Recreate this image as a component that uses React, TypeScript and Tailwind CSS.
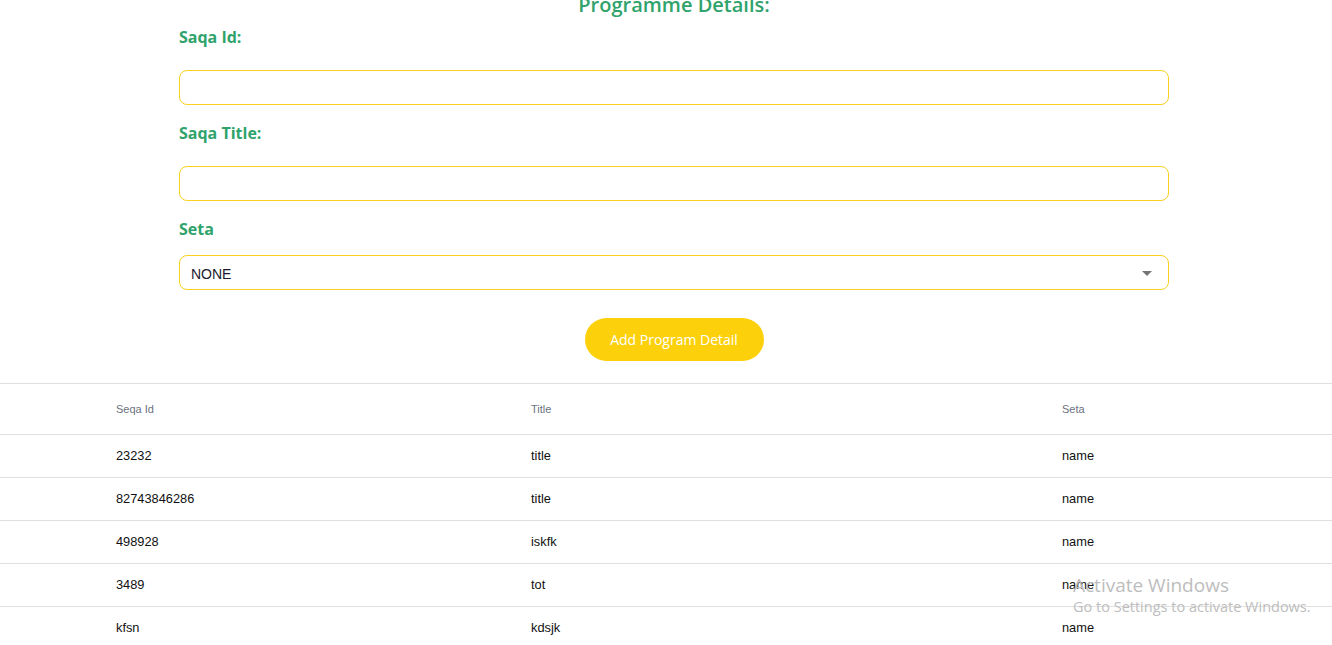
import { useState } from 'react';

type Row = { id: string; title: string; seta: string };

const rows: Row[] = [
  { id: '23232', title: 'title', seta: 'name' },
  { id: '82743846286', title: 'title', seta: 'name' },
  { id: '498928', title: 'iskfk', seta: 'name' },
  { id: '3489', title: 'tot', seta: 'name' },
  { id: 'kfsn', title: 'kdsjk', seta: 'name' },
];

export default function App() {
  const [saqaId, setSaqaId] = useState('');
  const [saqaTitle, setSaqaTitle] = useState('');
  const [seta, setSeta] = useState('NONE');

  return (
    <div className="relative h-[645px] overflow-hidden bg-white font-['Open_Sans','Noto_Sans',sans-serif]">
      {/* Form */}
      <div className="ml-[179px] mt-[-9px] flex w-[990px] flex-col">
        <h2 className="text-center text-[20px] leading-[28px] font-semibold text-[#2fa36b]">
          Programme Details:
        </h2>

        <label className="mt-[6px] text-[16px] leading-[24px] font-bold text-[#2fa36b]">Saqa Id:</label>
        <input
          value={saqaId}
          onChange={e => setSaqaId(e.target.value)}
          className="mt-[21px] h-[35px] rounded-[8px] border border-[#fad11e] px-[11px] text-[14px] outline-none"
        />

        <label className="mt-[16px] text-[16px] leading-[24px] font-bold text-[#2fa36b]">Saqa Title:</label>
        <input
          value={saqaTitle}
          onChange={e => setSaqaTitle(e.target.value)}
          className="mt-[21px] h-[35px] rounded-[8px] border border-[#fad11e] px-[11px] text-[14px] outline-none"
        />

        <label className="mt-[16px] text-[16px] leading-[24px] font-bold text-[#2fa36b]">Seta</label>
        <div className="relative mt-[14px] h-[35px] rounded-[8px] border border-[#fad11e]">
          <select
            value={seta}
            onChange={e => setSeta(e.target.value)}
            className="h-full w-full appearance-none bg-transparent pl-[11px] pt-[3px] font-['Liberation_Sans',Arial,sans-serif] text-[14px] text-[#1a1a2e] outline-none"
          >
            <option value="NONE">NONE</option>
          </select>
          <svg className="pointer-events-none absolute right-[16px] top-[15px]" width="10" height="5" viewBox="0 0 10 5">
            <path d="M0 0h10L5 5z" fill="#757575" />
          </svg>
        </div>

        <div className="mt-[28px] flex justify-center">
          <button className="h-[43px] w-[179px] rounded-full bg-[#fdd00c] text-[14px] text-white">
            Add Program Detail
          </button>
        </div>
      </div>

      {/* Table */}
      <div className="mt-[22px] border-t border-[#e0e0e0] font-['Liberation_Sans',Arial,sans-serif]">
        <div className="grid h-[51px] grid-cols-[415px_531px_1fr] items-center border-b border-[#e0e0e0] pl-[116px] text-[11px] text-[#6b7280]">
          <div>Seqa Id</div>
          <div>Title</div>
          <div>Seta</div>
        </div>
        {rows.map(r => (
          <div
            key={r.id}
            className="grid h-[43px] grid-cols-[415px_531px_1fr] items-center border-b border-[#e0e0e0] pl-[116px] text-[12.8px] text-[#111]"
          >
            <div>{r.id}</div>
            <div>{r.title}</div>
            <div>{r.seta}</div>
          </div>
        ))}
      </div>

      {/* Windows watermark */}
      <div className="pointer-events-none absolute left-[1073px] top-[573px] font-['Open_Sans','Noto_Sans',sans-serif] text-[#bdbdbd]">
        <div className="text-[19px] leading-[24px]">Activate Windows</div>
        <div className="text-[14.5px] leading-[20px]">Go to Settings to activate Windows.</div>
      </div>
    </div>
  );
}
